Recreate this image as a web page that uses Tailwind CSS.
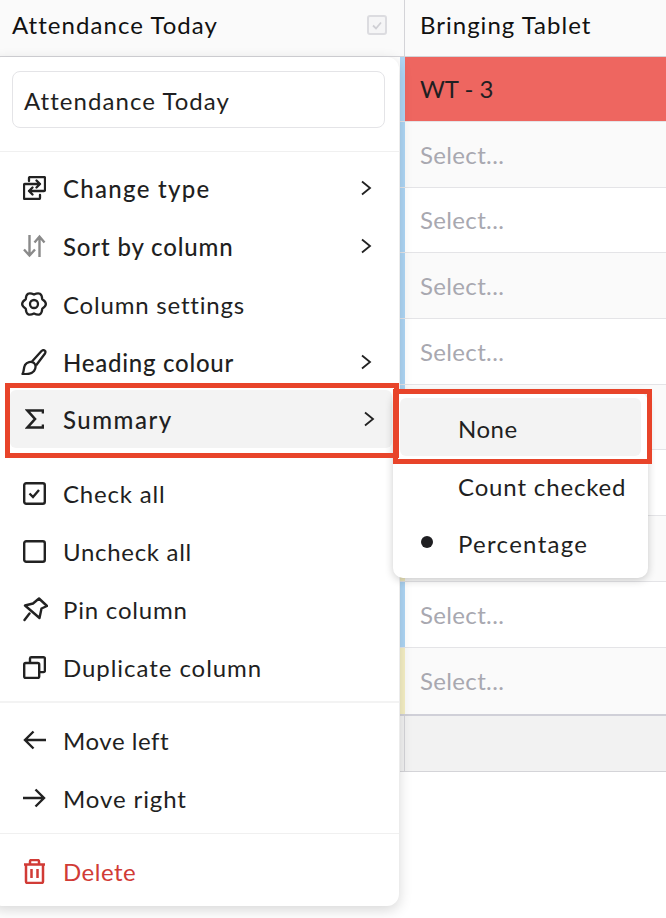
<!DOCTYPE html>
<html lang="en">
<head>
  <meta charset="UTF-8" />
  <title>Attendance column menu</title>
  <script src="https://cdn.jsdelivr.net/npm/@tailwindcss/browser@4"></script>
</head>
<body class="bg-white text-[#1f1f22] font-['Lato',sans-serif] text-[24px] overflow-hidden">
  <div class="relative w-[666px] h-[918px] overflow-hidden">

    <!-- Table -->
    <div class="flex h-[57px] bg-[#fafafa] border-b border-[#d4d4d8]">
      <div class="w-[405px] flex items-center justify-between pl-3 pr-[17px] pb-[6px] border-r border-[#d4d4d8] text-[#111]">
        <span class="tracking-[1.05px]">Attendance Today</span>
        <svg class="w-[20px] h-[20px]" viewBox="0 0 20 20" fill="none"><rect x="1" y="1" width="18" height="18" rx="2" fill="#f5f5f6" stroke="#dcdce0" stroke-width="2"/><path d="M6 10.500l3 3 5-6" stroke="#cfcfd4" stroke-width="1.800"/></svg>
      </div>
      <div class="flex-1 flex items-center pl-[15px] pb-[6px] text-[#111] tracking-[1px]">Bringing Tablet</div>
    </div>

    <div class="pl-[400px]">
      <div class="flex h-[65px] border-b border-[#e4e4e7]"><div class="w-[5px] bg-[#aed6f5]"></div><div class="flex-1 bg-[#ee6660] flex items-center pl-[15px]">WT - 3</div></div>
      <div class="flex h-[66px] border-b border-[#e4e4e7]"><div class="w-[5px] bg-[#aed6f5]"></div><div class="flex-1 bg-[#fafafa] flex items-center pl-[15px] text-[#a8a8b0] tracking-[0.35px]">Select...</div></div>
      <div class="flex h-[65px] border-b border-[#e4e4e7]"><div class="w-[5px] bg-[#aed6f5]"></div><div class="flex-1 bg-white flex items-center pl-[15px] text-[#a8a8b0] tracking-[0.35px]">Select...</div></div>
      <div class="flex h-[66px] border-b border-[#e4e4e7]"><div class="w-[5px] bg-[#aed6f5]"></div><div class="flex-1 bg-[#fafafa] flex items-center pl-[15px] text-[#a8a8b0] tracking-[0.35px]">Select...</div></div>
      <div class="flex h-[66px] border-b border-[#e4e4e7]"><div class="w-[5px] bg-[#aed6f5]"></div><div class="flex-1 bg-white flex items-center pl-[15px] text-[#a8a8b0] tracking-[0.35px]">Select...</div></div>
      <div class="flex h-[65px] border-b border-[#e4e4e7]"><div class="w-[5px] bg-[#aed6f5]"></div><div class="flex-1 bg-[#fafafa]"></div></div>
      <div class="flex h-[66px] border-b border-[#e4e4e7]"><div class="w-[5px] bg-[#aed6f5]"></div><div class="flex-1 bg-white"></div></div>
      <div class="flex h-[66px] border-b border-[#e4e4e7]"><div class="w-[5px] bg-[#f5efc4]"></div><div class="flex-1 bg-[#fafafa]"></div></div>
      <div class="flex h-[66px] border-b border-[#e4e4e7]"><div class="w-[5px] bg-[#aed6f5]"></div><div class="flex-1 bg-white flex items-center pl-[15px] text-[#a8a8b0] tracking-[0.35px]">Select...</div></div>
      <div class="flex h-[66px]"><div class="w-[5px] bg-[#f5efc4]"></div><div class="flex-1 bg-[#fafafa] flex items-center pl-[15px] text-[#a8a8b0] tracking-[0.35px]">Select...</div></div>
      <div class="flex h-[58px] bg-[#f2f2f2] border-y border-t-2 border-t-[#d0d0d8] border-b-[#d4d4d8]"><div class="w-[5px] border-r border-[#d4d4d8]"></div></div>
    </div>

    <!-- Column menu -->
    <div class="absolute left-[-10px] top-[57px] w-[409px] h-[849px] bg-white rounded-[12px] shadow-[0_4px_14px_rgba(0,0,0,0.16)] pl-[10px]">
      <div class="pt-[14px] pl-3 pr-[14px] pb-[23px] border-b border-[#f0f0f0]">
        <div class="h-[57px] border border-[#e4e4e7] rounded-[8px] flex items-center pl-[11px] pt-[2px] tracking-[1.05px]">Attendance Today</div>
      </div>
      <div class="pt-[7px]">
        <div class="h-[58px] flex items-center pl-[23px] pr-[27px] gap-[17px] font-medium">
          <svg class="w-[23px] h-[24px]" viewBox="0 0 23 24" fill="none" stroke="#222" stroke-width="2.300" stroke-linecap="round" stroke-linejoin="round"><path d="M6 5V2a1 1 0 0 1 1-1h14a1 1 0 0 1 1 1v12a1 1 0 0 1-1 1H6M9.500 11.500L6 15l3.500 3.500"/><path d="M17 19v3a1 1 0 0 1-1 1H2a1 1 0 0 1-1-1V9a1 1 0 0 1 1-1h15M13.500 4.500L17 8l-3.500 3.500"/></svg>
          <span class="flex-1 pt-[2px] tracking-[1.3px]">Change type</span>
          <svg class="w-[12px] h-[16px]" viewBox="0 0 12 16" fill="none" stroke="#222" stroke-width="1.800"><path d="M2 1.500L10 8l-8 6.500"/></svg>
        </div>
        <div class="h-[58px] flex items-center pl-[23px] pr-[27px] gap-[17px] font-medium">
          <svg class="w-[23px] h-[24px]" viewBox="0 0 23 24" fill="none" stroke="#8a8a8a" stroke-width="2.400"><path d="M6.500 1v20M1 15.500l5.500 6 5.500-6"/><path d="M16.500 23V3M11.500 8.500l5-6 5 6"/></svg>
          <span class="flex-1 pt-[2px] tracking-[0.85px]">Sort by column</span>
          <svg class="w-[12px] h-[16px]" viewBox="0 0 12 16" fill="none" stroke="#222" stroke-width="1.800"><path d="M2 1.500L10 8l-8 6.500"/></svg>
        </div>
        <div class="h-[58px] flex items-center pl-[21px] pr-[27px] gap-[16px]">
          <svg class="w-[26px] h-[26px]" viewBox="0 0 26 26" fill="none" stroke="#222" stroke-width="2.300" stroke-linejoin="round"><circle cx="13" cy="13" r="4"/><path d="M13 3.500Q20.750-.420 21.230 8.250 28.500 13 21.230 17.750 20.750 26.420 13 22.500 5.250 26.420 4.770 17.750-2.500 13 4.770 8.250 5.250-.420 13 3.500z"/></svg>
          <span class="flex-1 pt-[2px] tracking-[0.8px]">Column settings</span>
        </div>
        <div class="h-[57px] flex items-center pl-[21px] pr-[27px] gap-[16px] font-medium">
          <svg class="w-[26px] h-[26px]" viewBox="0 0 26 26" fill="none" stroke="#222" stroke-width="2.300" stroke-linejoin="round"><path d="M1.500 25c1.500-2 1-6 2.500-9 2-3 6-4 9-2 2 2 2 5 0 8-2.500 3-7 3.500-11.500 3z"/><path d="M11 12.500L20.500 2c2-1.800 5-.5 3.500 2.500L15 16.500"/></svg>
          <span class="flex-1 pt-[2px] tracking-[0.75px]">Heading colour</span>
          <svg class="w-[12px] h-[16px]" viewBox="0 0 12 16" fill="none" stroke="#222" stroke-width="1.800"><path d="M2 1.500L10 8l-8 6.500"/></svg>
        </div>
        <div class="h-[58px] ml-[10px] mr-[7px] bg-[#f3f3f3] rounded-[6px] flex items-center pl-[15px] pr-[17px] gap-[19px] font-medium">
          <svg class="w-[19px] h-[20px]" viewBox="0 0 19 20" fill="none" stroke="#222" stroke-width="2.600"><path d="M18 4.500V1.500H2.500L10 10l-7.500 8.500H18v-3"/></svg>
          <span class="flex-1 pt-[2px] tracking-[1.5px]">Summary</span>
          <svg class="w-[12px] h-[16px]" viewBox="0 0 12 16" fill="none" stroke="#222" stroke-width="1.800"><path d="M2 1.500L10 8l-8 6.500"/></svg>
        </div>
      </div>
      <div class="pt-[16px] pb-[5px] border-b-2 border-[#f3f3f3]">
        <div class="h-[58px] flex items-center pl-[23px] gap-[17px]">
          <svg class="w-[23px] h-[23px]" viewBox="0 0 23 23" fill="none" stroke="#222" stroke-width="2.400"><rect x="1.200" y="1.200" width="20.600" height="20.600" rx="2"/><path d="M6.500 11.500l3.500 3.500 6-7"/></svg>
          <span class="pt-[2px] tracking-[0.8px]">Check all</span>
        </div>
        <div class="h-[58px] flex items-center pl-[23px] gap-[17px]">
          <svg class="w-[23px] h-[23px]" viewBox="0 0 23 23" fill="none" stroke="#222" stroke-width="2.400"><rect x="1.200" y="1.200" width="20.600" height="20.600" rx="2"/></svg>
          <span class="pt-[2px] tracking-[0.7px]">Uncheck all</span>
        </div>
        <div class="h-[58px] flex items-center pl-[23px] gap-[15px]">
          <svg class="w-[25px] h-[25px]" viewBox="0 0 25 25" fill="none" stroke="#222" stroke-width="2.400" stroke-linejoin="round" stroke-linecap="round"><path d="M16 1.500l8 7.500-5.500 2.500L16.500 21 2 8.500l8-2zM6.500 16.500l-5 6.500"/></svg>
          <span class="pt-[2px] tracking-[0.8px]">Pin column</span>
        </div>
        <div class="h-[58px] flex items-center pl-[23px] gap-[17px]">
          <svg class="w-[23px] h-[23px]" viewBox="0 0 23 23" fill="none" stroke="#222" stroke-width="2.400"><rect x="1.200" y="7" width="15" height="15" rx="1.500"/><path d="M7 7V2.500A1.400 1.400 0 0 1 8.400 1.200h12.100a1.400 1.400 0 0 1 1.400 1.400v12.100a1.400 1.400 0 0 1-1.400 1.400H16"/></svg>
          <span class="pt-[2px] tracking-[0.95px]">Duplicate column</span>
        </div>
      </div>
      <div class="pt-[8px] pb-[6px] border-b border-[#f0f0f0]">
        <div class="h-[58px] flex items-center pl-[23px] gap-[17px]">
          <svg class="w-[23px] h-[20px]" viewBox="0 0 23 20" fill="none" stroke="#222" stroke-width="2.400"><path d="M23 10H2M10.500 1.500L2 10l8.500 8.500"/></svg>
          <span class="pt-[2px] tracking-[0.55px]">Move left</span>
        </div>
        <div class="h-[58px] flex items-center pl-[23px] gap-[17px]">
          <svg class="w-[23px] h-[20px]" viewBox="0 0 23 20" fill="none" stroke="#222" stroke-width="2.400"><path d="M0 10h21M12.500 1.500L21 10l-8.500 8.500"/></svg>
          <span class="pt-[2px] tracking-[0.9px]">Move right</span>
        </div>
      </div>
      <div class="pt-[8px]">
        <div class="h-[58px] flex items-center pl-[23px] gap-[17px] text-[#d13b36]">
          <svg class="w-[23px] h-[25px]" viewBox="0 0 23 25" fill="none" stroke="#d13b36" stroke-width="2.500"><path d="M1 5.500h21M3 5.500v17a1.500 1.500 0 0 0 1.500 1.500h14a1.500 1.500 0 0 0 1.500-1.500v-17M7 5.500V2.500A1.500 1.500 0 0 1 8.500 1h6A1.500 1.500 0 0 1 16 2.500v3M8.500 10v9M14.500 10v9"/></svg>
          <span class="pt-[2px] tracking-[0.5px]">Delete</span>
        </div>
      </div>
    </div>

    <!-- Summary submenu -->
    <div class="absolute left-[393px] top-[392px] w-[255px] h-[186px] bg-white rounded-[10px] shadow-[0_2px_8px_rgba(0,0,0,0.2)] pt-[6px] px-[7px]">
      <div class="h-[58px] bg-[#f3f3f3] rounded-[6px] flex items-center pl-[58px] pt-[4px] tracking-[0.5px]">None</div>
      <div class="h-[58px] flex items-center pl-[58px] pt-[4px] tracking-[0.85px]">Count checked</div>
      <div class="h-[56px] relative flex items-center pl-[58px] pt-[4px] tracking-[1.3px]">
        <span class="absolute left-[21px] top-[22px] w-[12px] h-[12px] rounded-full bg-[#1f1f22]"></span>
        Percentage
      </div>
    </div>

    <!-- Red annotation boxes -->
    <div class="absolute left-[5px] top-[383px] w-[394px] h-[75px] border-[5px] border-[#e8442a]"></div>
    <div class="absolute left-[393px] top-[389px] w-[259px] h-[75px] border-[5px] border-[#e8442a]"></div>
  </div>
</body>
</html>
